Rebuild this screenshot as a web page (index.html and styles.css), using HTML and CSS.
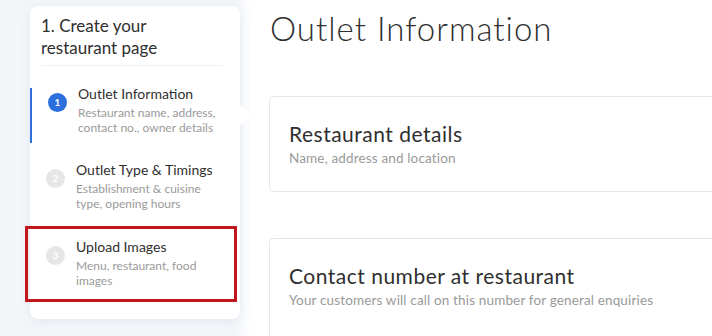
FILE: index.html
```html
<!DOCTYPE html>
<html lang="en">
<head>
	<meta charset="UTF-8" />
	<title>Create your restaurant page</title>
	<link rel="stylesheet" href="styles.css">
</head>
<body>
	<div class="page">
		<aside class="side-col">
			<div class="sidebar">
				<h2 class="side-title">1. Create your restaurant page</h2>
				<ul class="steps">
					<li class="step active">
						<span class="step-num">1</span>
						<div class="step-text">
							<div class="step-name">Outlet Information</div>
							<div class="step-desc">Restaurant name, address, contact no., owner details</div>
						</div>
					</li>
					<li class="step">
						<span class="step-num">2</span>
						<div class="step-text">
							<div class="step-name">Outlet Type &amp; Timings</div>
							<div class="step-desc">Establishment &amp; cuisine type, opening hours</div>
						</div>
					</li>
					<li class="step marked">
						<span class="step-num">3</span>
						<div class="step-text">
							<div class="step-name">Upload Images</div>
							<div class="step-desc">Menu, restaurant, food images</div>
						</div>
					</li>
				</ul>
			</div>
		</aside>
		<main class="content">
			<h1 class="page-title">Outlet Information</h1>
			<div class="card">
				<div class="card-title">Restaurant details</div>
				<div class="card-sub">Name, address and location</div>
			</div>
			<div class="card open">
				<div class="card-title">Contact number at restaurant</div>
				<div class="card-sub">Your customers will call on this number for general enquiries</div>
			</div>
		</main>
	</div>
</body>
</html>
```

FILE: styles.css
```css
*{
	box-sizing: border-box;
}
html,body{
	margin:0;
	padding:0;
	height:100%;
	overflow:hidden;
}
body{
	font-family: Lato, "Open Sans", sans-serif;
	color:#2f2f2f;
	background:#fff;
}
.page{
	display:flex;
	height:100%;
}
.side-col{
	flex:0 0 252px;
	padding:6px 12px 0 30px;
	background:linear-gradient(to right, #f3f5f9 0, #f3f5f9 236px, #fafbfd 244px, #fff 252px);
}
.sidebar{
	position:relative;
	width:210px;
	background:#fff;
	border-radius:8px;
	padding:9px 0 23px;
	box-shadow:0 2px 10px rgba(180,190,210,0.25);
}
.side-title{
	margin:0 17px 22px 11px;
	padding:0 40px 6px 0;
	border-bottom:1px solid #eef0f3;
	font-size:17px;
	line-height:22px;
	font-weight:400;
	color:#2f2f2f;
}
.steps{
	list-style:none;
	margin:0;
	padding:0;
}
.step{
	position:relative;
	display:flex;
	align-items:flex-start;
	padding:0 16px 8px 16px;
	margin-top:21px;
}
.step:first-child{
	margin-top:0;
}
.step.active{
	border-left:2px solid #2f6fd8;
	padding-left:16px;
}
.step.active::after{
	content:"";
	position:absolute;
	right:-11px;
	top:17px;
	border-style:solid;
	border-width:10px 0 10px 11px;
	border-color:transparent transparent transparent #fff;
}
.step-num{
	flex:0 0 19px;
	width:19px;
	height:19px;
	margin-top:5px;
	margin-right:11px;
	border-radius:50%;
	background:#e6e6e6;
	color:#fff;
	font-size:10px;
	font-weight:700;
	line-height:19px;
	text-align:center;
}
.step.active .step-num{
	background:#2b6fdc;
}
.step-text{
	max-width:148px;
}
.step-name{
	font-size:14px;
	line-height:12px;
	color:#2f2f2f;
}
.step-desc{
	margin-top:5px;
	font-size:12px;
	line-height:15px;
	color:#9a9a9a;
}
.step.marked{
	margin-top:22px;
}
.step.marked::before{
	content:"";
	position:absolute;
	top:-15px;
	bottom:-6px;
	left:-5px;
	right:3px;
	border:3px solid #c3161c;
}
.content{
	flex:1;
	overflow:hidden;
	padding:8px 0 0 17px;
}
.page-title{
	margin:0 0 48px 1px;
	font-size:33px;
	line-height:40px;
	font-weight:300;
	letter-spacing:1px;
	color:#2f2f2f;
}
.card{
	border:1px solid #e6e7ea;
	border-radius:4px;
	padding:25px 19px 24px;
	margin:0 -12px 46px 0;
}
.card.open{
	padding-bottom:60px;
}
.card-title{
	font-size:21px;
	line-height:24px;
	letter-spacing:0.5px;
	color:#2f2f2f;
}
.card-sub{
	margin-top:3px;
	font-size:13.5px;
	line-height:18px;
	letter-spacing:0.15px;
	color:#9a9a9a;
}
```
